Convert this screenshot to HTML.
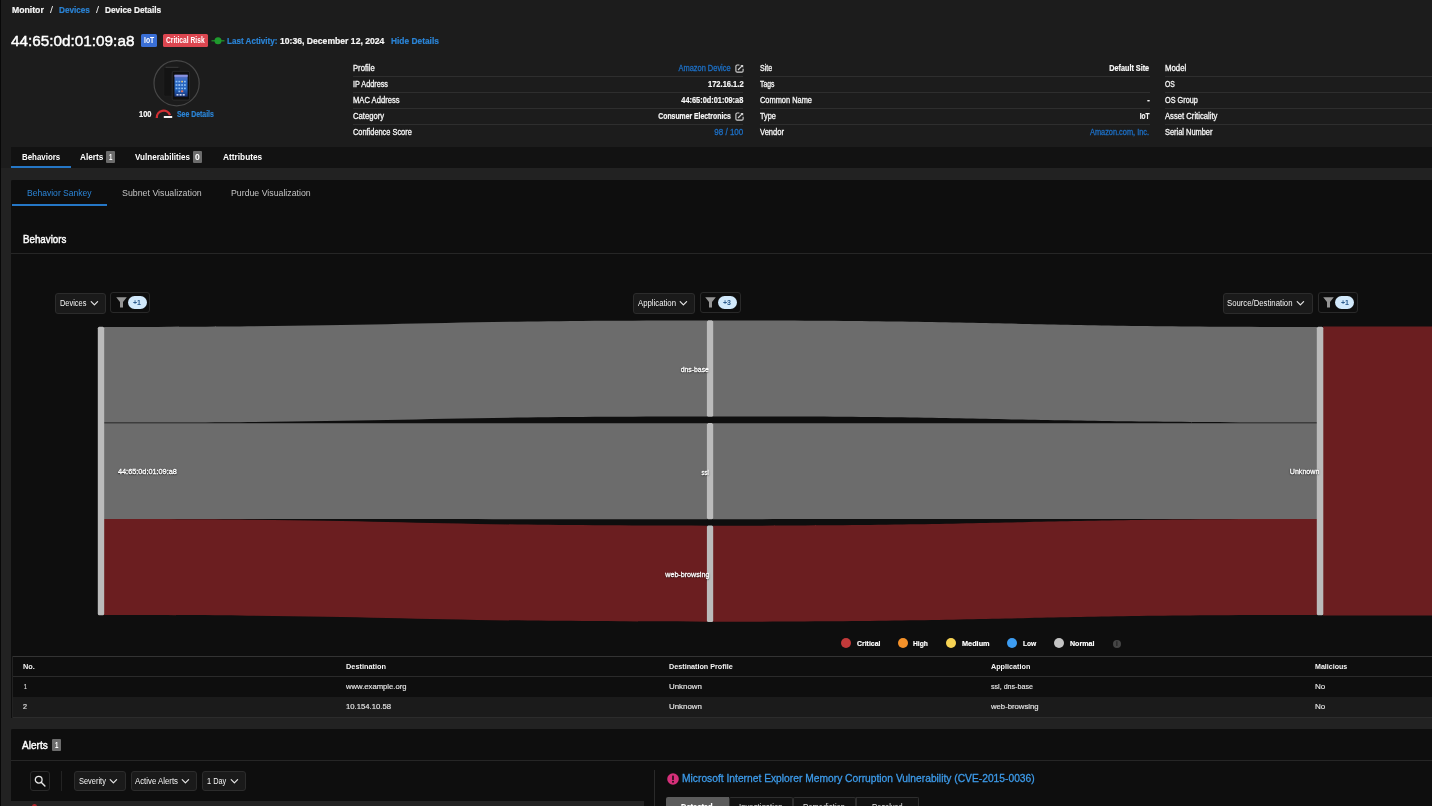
<!DOCTYPE html>
<html lang="en">
<head>
<meta charset="utf-8">
<title>Device Details</title>
<style>
*{box-sizing:border-box;margin:0;padding:0}
html,body{width:1432px;height:806px;overflow:hidden;background:#1b1b1b;}
body{position:relative;font-family:"Liberation Sans",sans-serif;color:#f0f0f0;font-size:9px;}
.abs{position:absolute}
.t{position:absolute;white-space:nowrap;line-height:14px;height:14px;transform-origin:0 50%;}
.t.r{transform-origin:100% 50%;}
.b{font-weight:bold}
.hl{position:absolute;height:1px;background:#2e2e2e}
.btn{position:absolute;border:1px solid #2c2c2c;border-radius:3px;background:#1a1a1a}
.fbtn{position:absolute;border:1px solid #292929;border-radius:3px;background:transparent}
.pill{position:absolute;border-radius:7px;background:#d2e9fb}
.badge{position:absolute;background:#6c6c6c;border-radius:1px}
#txt{position:absolute;left:0;top:0;width:1432px;height:806px;will-change:transform}

</style>
</head>
<body>
<!-- backgrounds -->
<div class="abs" style="left:0;top:0;width:1432px;height:147px;background:#1c1c1c"></div>
<div class="abs" style="left:0;top:147px;width:11px;height:21px;background:#1c1c1c"></div>
<div class="abs" style="left:0;top:168px;width:11px;height:638px;background:#222222"></div>
<div class="abs" style="left:0;top:0;width:1.2px;height:806px;background:#080808"></div>
<div class="abs" style="left:11px;top:146.5px;width:1421px;height:21.5px;background:#121212"></div>
<div class="abs" style="left:11px;top:168px;width:1421px;height:11.5px;background:#222222"></div>
<div class="abs" style="left:11px;top:179.5px;width:1421px;height:538px;background:#0e0e0e;border-top-left-radius:2px"></div>
<div class="abs" style="left:11px;top:717.5px;width:1421px;height:11.5px;background:#222222"></div>
<div class="abs" style="left:11px;top:729px;width:1421px;height:77px;background:#0e0e0e;border-top-left-radius:2px"></div>

<!-- title badges -->
<div class="abs" style="left:141px;top:34px;width:16px;height:12.6px;background:#3a6fd6;border-radius:1.5px"></div>
<div class="abs" style="left:163px;top:34px;width:45px;height:12.6px;background:#dc4650;border-radius:1.5px"></div>
<svg class="abs" style="left:211px;top:35px" width="14" height="12" viewBox="0 0 14 12"><line x1="0.5" y1="5.8" x2="13.5" y2="5.8" stroke="#1f9a2d" stroke-width="1.2"/><circle cx="7" cy="5.8" r="3.5" fill="#1f9a2d"/></svg>

<!-- info table lines -->
<div class="hl" style="left:353px;top:76px;width:390.3px"></div>
<div class="hl" style="left:353px;top:92px;width:390.3px"></div>
<div class="hl" style="left:353px;top:108px;width:390.3px"></div>
<div class="hl" style="left:353px;top:123.5px;width:390.3px"></div>
<div class="hl" style="left:759.5px;top:76px;width:390px"></div>
<div class="hl" style="left:759.5px;top:92px;width:390px"></div>
<div class="hl" style="left:759.5px;top:108px;width:390px"></div>
<div class="hl" style="left:759.5px;top:123.5px;width:390px"></div>
<div class="hl" style="left:1165.2px;top:76px;width:267px"></div>
<div class="hl" style="left:1165.2px;top:92px;width:267px"></div>
<div class="hl" style="left:1165.2px;top:108px;width:267px"></div>
<div class="hl" style="left:1165.2px;top:123.5px;width:267px"></div>

<!-- main tab underline + badges -->
<div class="abs" style="left:11px;top:166px;width:60px;height:2px;background:#2577c6"></div>
<div class="badge" style="left:106px;top:151px;width:9px;height:12.3px"></div>
<div class="badge" style="left:193px;top:151px;width:9.4px;height:12.3px"></div>
<!-- sub tab underline -->
<div class="abs" style="left:11.6px;top:204px;width:95.4px;height:2px;background:#2577c6"></div>
<div class="hl" style="left:11px;top:253px;width:1421px;background:#262626"></div>

<!-- sankey controls -->
<div class="btn" style="left:55px;top:293px;width:50.5px;height:20.5px"></div>
<svg class="abs" style="left:89.5px;top:299.5px" width="9" height="7" viewBox="0 0 9 7"><path d="M1.2 1.7 L4.4 4.9 L7.6 1.7" fill="none" stroke="#e6e6e6" stroke-width="1.2" stroke-linecap="round" stroke-linejoin="round"/></svg>
<div class="fbtn" style="left:110.2px;top:292.3px;width:40px;height:20.6px"></div>
<svg class="abs" style="left:115.5px;top:297.3px" width="11" height="11" viewBox="0 0 11 11"><path d="M0.2 0.3 H10.8 L7 4.9 V10.6 H4 V4.9 Z" fill="#959595"/></svg>
<div class="pill" style="left:127.7px;top:296.2px;width:19.3px;height:12.8px"></div>

<div class="btn" style="left:633.3px;top:293px;width:62.2px;height:20.5px"></div>
<svg class="abs" style="left:679px;top:299.5px" width="9" height="7" viewBox="0 0 9 7"><path d="M1.2 1.7 L4.4 4.9 L7.6 1.7" fill="none" stroke="#e6e6e6" stroke-width="1.2" stroke-linecap="round" stroke-linejoin="round"/></svg>
<div class="fbtn" style="left:700.3px;top:292.3px;width:40.3px;height:20.6px"></div>
<svg class="abs" style="left:705.3px;top:297.3px" width="11" height="11" viewBox="0 0 11 11"><path d="M0.2 0.3 H10.8 L7 4.9 V10.6 H4 V4.9 Z" fill="#959595"/></svg>
<div class="pill" style="left:717.8px;top:296.2px;width:19px;height:12.8px"></div>

<div class="btn" style="left:1223px;top:293px;width:89.7px;height:20.5px"></div>
<svg class="abs" style="left:1296.2px;top:299.5px" width="9" height="7" viewBox="0 0 9 7"><path d="M1.2 1.7 L4.4 4.9 L7.6 1.7" fill="none" stroke="#e6e6e6" stroke-width="1.2" stroke-linecap="round" stroke-linejoin="round"/></svg>
<div class="fbtn" style="left:1318px;top:292.3px;width:39.8px;height:20.6px"></div>
<svg class="abs" style="left:1322.5px;top:297.3px" width="11" height="11" viewBox="0 0 11 11"><path d="M0.2 0.3 H10.8 L7 4.9 V10.6 H4 V4.9 Z" fill="#959595"/></svg>
<div class="pill" style="left:1335px;top:296.2px;width:19px;height:12.8px"></div>

<!-- sankey -->
<svg class="abs" style="left:0;top:310px" width="1432" height="320" viewBox="0 310 1432 320">
  <g fill="#6c6c6c">
    <path d="M104 327 C405.5 327 405.5 320.5 707 320.5 L707 416.5 C405.5 416.5 405.5 422.6 104 422.6 Z"/>
    <path d="M104 423.2 C405.5 423.2 405.5 423.3 707 423.3 L707 519.2 C405.5 519.2 405.5 519 104 519 Z"/>
    <path d="M713 320.5 C1015 320.5 1015 327 1317 327 L1317 422.6 C1015 422.6 1015 416.5 713 416.5 Z"/>
    <path d="M713 423.3 C1015 423.3 1015 423.2 1317 423.2 L1317 519 C1015 519 1015 519.2 713 519.2 Z"/>
  </g>
  <g fill="#6b1e20">
    <path d="M104 519 C405.5 519 405.5 525.7 707 525.7 L707 621.7 C405.5 621.7 405.5 615 104 615 Z"/>
    <path d="M713 525.7 C1015 525.7 1015 519 1317 519 L1317 615 C1015 615 1015 621.7 713 621.7 Z"/>
    <rect x="1323" y="326.5" width="109" height="289"/>
  </g>
  <g fill="#bbbbbb">
    <rect x="97.8" y="326.8" width="6.4" height="288.4" rx="1.5"/>
    <rect x="706.9" y="320.3" width="6.3" height="96.4" rx="1.5"/>
    <rect x="706.9" y="423.1" width="6.3" height="96.2" rx="1.5"/>
    <rect x="706.9" y="525.5" width="6.3" height="96.4" rx="1.5"/>
    <rect x="1316.8" y="326.8" width="6.5" height="288.4" rx="1.5"/>
  </g>
</svg>

<!-- legend -->
<div class="abs" style="left:840.8px;top:638.3px;width:10.2px;height:10.2px;border-radius:50%;background:#c23a3a"></div>
<div class="abs" style="left:897.8px;top:638.3px;width:10.2px;height:10.2px;border-radius:50%;background:#f5922a"></div>
<div class="abs" style="left:945.8px;top:638.3px;width:10.2px;height:10.2px;border-radius:50%;background:#f7d354"></div>
<div class="abs" style="left:1007.3px;top:638.3px;width:10.2px;height:10.2px;border-radius:50%;background:#3d9df2"></div>
<div class="abs" style="left:1054.2px;top:638.3px;width:10.2px;height:10.2px;border-radius:50%;background:#c4c4c4"></div>
<div class="abs" style="left:1112.5px;top:639.5px;width:8px;height:8px;border-radius:50%;background:#454545"></div>

<!-- table -->
<div class="hl" style="left:12px;top:656px;width:1420px;background:#333"></div>
<div class="hl" style="left:12px;top:675.7px;width:1420px;background:#2a2a2a"></div>
<div class="abs" style="left:12px;top:697px;width:1420px;height:20.5px;background:#1b1b1b"></div>
<div class="hl" style="left:12px;top:717px;width:1420px;background:#2c2c2c"></div>
<div class="abs" style="left:12px;top:656px;width:1px;height:62px;background:#222"></div>

<!-- alerts -->
<div class="badge" style="left:51.8px;top:738.7px;width:8.8px;height:12.3px"></div>
<div class="hl" style="left:11px;top:760px;width:1421px;background:#262626"></div>
<div class="fbtn" style="left:30.2px;top:771.2px;width:19.4px;height:19.6px"></div>
<svg class="abs" style="left:33.6px;top:775px" width="12" height="12" viewBox="0 0 11 11"><circle cx="4.3" cy="4.3" r="3.1" fill="none" stroke="#e6e6e6" stroke-width="1.2"/><line x1="6.6" y1="6.6" x2="10" y2="10" stroke="#e6e6e6" stroke-width="1.3" stroke-linecap="round"/></svg>
<div class="abs" style="left:60.7px;top:771px;width:1px;height:20px;background:#232323"></div>
<div class="btn" style="left:74.2px;top:771.2px;width:51.9px;height:19.6px"></div>
<svg class="abs" style="left:109.2px;top:777.5px" width="9" height="7" viewBox="0 0 9 7"><path d="M1.2 1.7 L4.4 4.9 L7.6 1.7" fill="none" stroke="#e6e6e6" stroke-width="1.2" stroke-linecap="round" stroke-linejoin="round"/></svg>
<div class="btn" style="left:131px;top:771.2px;width:65.8px;height:19.6px"></div>
<svg class="abs" style="left:181.3px;top:777.5px" width="9" height="7" viewBox="0 0 9 7"><path d="M1.2 1.7 L4.4 4.9 L7.6 1.7" fill="none" stroke="#e6e6e6" stroke-width="1.2" stroke-linecap="round" stroke-linejoin="round"/></svg>
<div class="btn" style="left:202.4px;top:771.2px;width:43.2px;height:19.6px"></div>
<svg class="abs" style="left:230px;top:777.5px" width="9" height="7" viewBox="0 0 9 7"><path d="M1.2 1.7 L4.4 4.9 L7.6 1.7" fill="none" stroke="#e6e6e6" stroke-width="1.2" stroke-linecap="round" stroke-linejoin="round"/></svg>
<div class="abs" style="left:11px;top:800.8px;width:633px;height:6px;background:#232323"></div>
<div class="abs" style="left:32.3px;top:804.2px;width:5px;height:5px;border-radius:50%;background:#b3262c"></div>
<div class="abs" style="left:654px;top:770px;width:1px;height:36px;background:#2a2a2a"></div>
<svg class="abs" style="left:666.9px;top:772.9px" width="12" height="12" viewBox="0 0 12 12"><circle cx="6" cy="6" r="5.8" fill="#d6307a"/><rect x="5.2" y="2.6" width="1.6" height="4.4" rx="0.5" fill="#1a0a12"/><circle cx="6" cy="8.7" r="0.95" fill="#1a0a12"/></svg>
<!-- status tabs -->
<div class="abs" style="left:666px;top:796.5px;width:63px;height:10px;background:#5c5c5c;border-top-left-radius:2px"></div>
<div class="abs" style="left:729px;top:796.5px;width:63.5px;height:10px;border:1px solid #2e2e2e;border-bottom:none;background:#121212;border-radius:2px 2px 0 0"></div>
<div class="abs" style="left:792.5px;top:796.5px;width:63.3px;height:10px;border:1px solid #2e2e2e;border-bottom:none;background:#121212;border-radius:2px 2px 0 0"></div>
<div class="abs" style="left:855.8px;top:796.5px;width:63.3px;height:10px;border:1px solid #2e2e2e;border-bottom:none;background:#121212;border-top-right-radius:2px"></div>

<!-- external link icons -->
<svg class="abs" style="left:734.5px;top:64.3px" width="9" height="9" viewBox="0 0 9 9"><path d="M4.4 1 H2.2 Q0.9 1 0.9 2.3 V6.9 Q0.9 8.1 2.2 8.1 H6.8 Q8.1 8.1 8.1 6.9 V4.8" fill="none" stroke="#d4d4d4" stroke-width="1.1"/><path d="M3 6 L7.6 1.4" stroke="#d4d4d4" stroke-width="1.2" fill="none"/><path d="M5.3 0.9 H8.2 V3.8 Z" fill="#d4d4d4"/></svg>
<svg class="abs" style="left:734.5px;top:112.3px" width="9" height="9" viewBox="0 0 9 9"><path d="M4.4 1 H2.2 Q0.9 1 0.9 2.3 V6.9 Q0.9 8.1 2.2 8.1 H6.8 Q8.1 8.1 8.1 6.9 V4.8" fill="none" stroke="#d4d4d4" stroke-width="1.1"/><path d="M3 6 L7.6 1.4" stroke="#d4d4d4" stroke-width="1.2" fill="none"/><path d="M5.3 0.9 H8.2 V3.8 Z" fill="#d4d4d4"/></svg>

<!-- device image -->
<svg class="abs" style="left:150px;top:58px" width="54" height="64" viewBox="150 58 54 64">
  <defs>
    <linearGradient id="scr" x1="0" y1="0" x2="0" y2="1">
      <stop offset="0" stop-color="#7a84cc"/><stop offset="0.12" stop-color="#5070c4"/><stop offset="0.3" stop-color="#2a68c4"/><stop offset="0.7" stop-color="#2260b8"/><stop offset="1" stop-color="#182f74"/>
    </linearGradient>
  </defs>
  <circle cx="176.6" cy="83.2" r="22.6" fill="#1b1b1b" stroke="#474747" stroke-width="1.2"/>
  <rect x="163.8" y="67" width="16.4" height="29.2" rx="1.5" fill="#141414" stroke="#242424" stroke-width="0.6"/>
  <rect x="165.5" y="66.8" width="13" height="1.2" fill="#3a3a3a" opacity=".8"/>
  <rect x="172.2" y="71.3" width="17.4" height="28.8" rx="1.6" fill="#0f0f0f" stroke="#303030" stroke-width="0.8"/>
  <rect x="174.5" y="74.8" width="13.1" height="21.8" fill="url(#scr)"/>
  <rect x="174.5" y="74.8" width="13.1" height="2" fill="#8b93e0"/>
  <g fill="#9fd0ff" opacity=".85">
    <rect x="175.6" y="80.8" width="1.8" height="1.6"/><rect x="178.4" y="80.8" width="1.8" height="1.6"/><rect x="181.2" y="80.8" width="1.8" height="1.6" fill="#ffcf70"/><rect x="184" y="80.8" width="1.8" height="1.6"/>
    <rect x="175.6" y="84.2" width="1.8" height="1.6"/><rect x="178.4" y="84.2" width="1.8" height="1.6" fill="#cfe6ff"/><rect x="181.2" y="84.2" width="1.8" height="1.6"/><rect x="184" y="84.2" width="1.8" height="1.6"/>
    <rect x="175.6" y="87.6" width="1.8" height="1.6"/><rect x="178.4" y="87.6" width="1.8" height="1.6"/><rect x="181.2" y="87.6" width="1.8" height="1.6"/><rect x="184" y="87.6" width="1.8" height="1.6"/>
    <rect x="178.4" y="90.6" width="1.8" height="1.6"/><rect x="181" y="90.4" width="2.2" height="1.8" fill="#ff7a50"/>
    <rect x="176.5" y="94" width="2" height="1.6" fill="#e6f0ff"/><rect x="179.6" y="94" width="2" height="1.6" fill="#e6f0ff"/><rect x="182.7" y="94" width="2" height="1.6" fill="#e6f0ff"/>
  </g>
  <!-- gauge -->
  <path d="M156.8 118 A6.8 6.8 0 0 1 170 115.2" fill="none" stroke="#d22f33" stroke-width="2.3"/>
  <rect x="163.8" y="116" width="8.4" height="2" fill="#f4f4f4"/>
</svg>

<div id="txt">
<div class="t b" style="top:2.60px;font-size:9px;color:#f6f6f6;left:12.00px;-webkit-text-stroke:0.2px currentColor;transform:scaleX(0.9636);">Monitor</div>
<div class="t" style="top:2.60px;font-size:9px;color:#f6f6f6;left:49.60px;transform:scaleX(1.1925);">/</div>
<div class="t b" style="top:2.60px;font-size:9px;color:#2b84d6;left:59.40px;-webkit-text-stroke:0.2px currentColor;transform:scaleX(0.9080);">Devices</div>
<div class="t" style="top:2.60px;font-size:9px;color:#f6f6f6;left:96.00px;transform:scaleX(1.1925);">/</div>
<div class="t b" style="top:2.60px;font-size:9px;color:#f6f6f6;left:105.40px;-webkit-text-stroke:0.2px currentColor;transform:scaleX(0.9206);">Device Details</div>
<div class="t" style="top:33.90px;font-size:15.3px;color:#ffffff;left:11.00px;-webkit-text-stroke:0.45px currentColor;transform:scaleX(1.0005);">44:65:0d:01:09:a8</div>
<div class="t b" style="top:33.30px;font-size:9.8px;color:#ffffff;left:143.90px;transform:scaleX(0.6937);">IoT</div>
<div class="t b" style="top:33.40px;font-size:9.4px;color:#ffffff;left:165.80px;transform:scaleX(0.7121);">Critical Risk</div>
<div class="t b" style="top:33.80px;font-size:9px;color:#2b84d6;left:227.40px;-webkit-text-stroke:0.2px currentColor;transform:scaleX(0.8988);">Last Activity:</div>
<div class="t b" style="top:33.80px;font-size:9px;color:#f6f6f6;left:280.40px;-webkit-text-stroke:0.2px currentColor;transform:scaleX(0.9571);">10:36, December 12, 2024</div>
<div class="t b" style="top:33.80px;font-size:9px;color:#2b84d6;left:390.60px;-webkit-text-stroke:0.2px currentColor;transform:scaleX(0.9295);">Hide Details</div>
<div class="t b" style="top:107.00px;font-size:8.4px;color:#f6f6f6;left:138.50px;-webkit-text-stroke:0.2px currentColor;transform:scaleX(0.8939);">100</div>
<div class="t b" style="top:107.00px;font-size:8.4px;color:#2b84d6;left:176.70px;-webkit-text-stroke:0.2px currentColor;transform:scaleX(0.8254);">See Details</div>
<div class="t" style="top:61.00px;font-size:8.4px;color:#f6f6f6;left:353.30px;-webkit-text-stroke:0.3px currentColor;transform:scaleX(0.9137);">Profile</div>
<div class="t" style="top:77.00px;font-size:8.4px;color:#f6f6f6;left:353.30px;-webkit-text-stroke:0.3px currentColor;transform:scaleX(0.8672);">IP Address</div>
<div class="t" style="top:93.00px;font-size:8.4px;color:#f6f6f6;left:353.30px;-webkit-text-stroke:0.3px currentColor;transform:scaleX(0.9081);">MAC Address</div>
<div class="t" style="top:109.00px;font-size:8.4px;color:#f6f6f6;left:353.30px;-webkit-text-stroke:0.3px currentColor;transform:scaleX(0.9122);">Category</div>
<div class="t" style="top:125.00px;font-size:8.4px;color:#f6f6f6;left:353.30px;-webkit-text-stroke:0.3px currentColor;transform:scaleX(0.8832);">Confidence Score</div>
<div class="t r" style="top:61.00px;font-size:8.4px;color:#1d6fc4;right:701.40px;-webkit-text-stroke:0.3px currentColor;transform:scaleX(0.8899);">Amazon Device</div>
<div class="t r b" style="top:77.00px;font-size:8.4px;color:#f6f6f6;right:688.80px;-webkit-text-stroke:0.2px currentColor;transform:scaleX(0.8991);">172.16.1.2</div>
<div class="t r b" style="top:93.00px;font-size:8.4px;color:#f6f6f6;right:688.80px;-webkit-text-stroke:0.2px currentColor;transform:scaleX(0.8820);">44:65:0d:01:09:a8</div>
<div class="t r b" style="top:109.00px;font-size:8.4px;color:#f6f6f6;right:701.40px;-webkit-text-stroke:0.2px currentColor;transform:scaleX(0.8166);">Consumer Electronics</div>
<div class="t r" style="top:125.00px;font-size:8.4px;color:#1d6fc4;right:688.80px;-webkit-text-stroke:0.3px currentColor;transform:scaleX(0.9577);">98 / 100</div>
<div class="t" style="top:61.00px;font-size:8.4px;color:#f6f6f6;left:759.60px;-webkit-text-stroke:0.3px currentColor;transform:scaleX(0.8450);">Site</div>
<div class="t" style="top:77.00px;font-size:8.4px;color:#f6f6f6;left:759.60px;-webkit-text-stroke:0.3px currentColor;transform:scaleX(0.8134);">Tags</div>
<div class="t" style="top:93.00px;font-size:8.4px;color:#f6f6f6;left:759.60px;-webkit-text-stroke:0.3px currentColor;transform:scaleX(0.8865);">Common Name</div>
<div class="t" style="top:109.00px;font-size:8.4px;color:#f6f6f6;left:759.60px;-webkit-text-stroke:0.3px currentColor;transform:scaleX(0.8757);">Type</div>
<div class="t" style="top:125.00px;font-size:8.4px;color:#f6f6f6;left:759.60px;-webkit-text-stroke:0.3px currentColor;transform:scaleX(0.9041);">Vendor</div>
<div class="t r b" style="top:61.00px;font-size:8.4px;color:#f6f6f6;right:282.60px;-webkit-text-stroke:0.2px currentColor;transform:scaleX(0.8638);">Default Site</div>
<div class="t r b" style="top:93.00px;font-size:8.4px;color:#f6f6f6;right:282.60px;-webkit-text-stroke:0.2px currentColor;transform:scaleX(0.8939);">-</div>
<div class="t r b" style="top:109.00px;font-size:8.4px;color:#f6f6f6;right:282.60px;-webkit-text-stroke:0.2px currentColor;transform:scaleX(0.7801);">IoT</div>
<div class="t r" style="top:125.00px;font-size:8.4px;color:#1d6fc4;right:282.60px;-webkit-text-stroke:0.3px currentColor;transform:scaleX(0.8802);">Amazon.com, Inc.</div>
<div class="t" style="top:61.00px;font-size:8.4px;color:#f6f6f6;left:1165.40px;-webkit-text-stroke:0.3px currentColor;transform:scaleX(0.9337);">Model</div>
<div class="t" style="top:77.00px;font-size:8.4px;color:#f6f6f6;left:1165.40px;-webkit-text-stroke:0.3px currentColor;transform:scaleX(0.8093);">OS</div>
<div class="t" style="top:93.00px;font-size:8.4px;color:#f6f6f6;left:1165.40px;-webkit-text-stroke:0.3px currentColor;transform:scaleX(0.8696);">OS Group</div>
<div class="t" style="top:109.00px;font-size:8.4px;color:#f6f6f6;left:1165.40px;-webkit-text-stroke:0.3px currentColor;transform:scaleX(0.9153);">Asset Criticality</div>
<div class="t" style="top:125.00px;font-size:8.4px;color:#f6f6f6;left:1165.40px;-webkit-text-stroke:0.3px currentColor;transform:scaleX(0.8855);">Serial Number</div>
<div class="t b" style="top:149.90px;font-size:9.2px;color:#ffffff;left:21.50px;transform:scaleX(0.8596);">Behaviors</div>
<div class="t b" style="top:149.90px;font-size:9.2px;color:#ffffff;left:80.00px;transform:scaleX(0.8984);">Alerts</div>
<div class="t b" style="top:150.10px;font-size:8.8px;color:#ffffff;left:108.90px;transform:scaleX(0.6930);">1</div>
<div class="t b" style="top:149.90px;font-size:9.2px;color:#ffffff;left:135.20px;transform:scaleX(0.8804);">Vulnerabilities</div>
<div class="t b" style="top:150.10px;font-size:8.8px;color:#ffffff;left:195.30px;transform:scaleX(0.9783);">0</div>
<div class="t b" style="top:149.90px;font-size:9.2px;color:#ffffff;left:222.60px;transform:scaleX(0.9034);">Attributes</div>
<div class="t" style="top:185.60px;font-size:9.3px;color:#2b84d6;left:27.30px;transform:scaleX(0.9190);">Behavior Sankey</div>
<div class="t" style="top:185.60px;font-size:9.3px;color:#c4c4c4;left:121.70px;transform:scaleX(0.9479);">Subnet Visualization</div>
<div class="t" style="top:185.60px;font-size:9.3px;color:#c4c4c4;left:231.30px;transform:scaleX(0.9421);">Purdue Visualization</div>
<div class="t" style="top:231.80px;font-size:11.6px;color:#ffffff;left:22.50px;-webkit-text-stroke:0.45px currentColor;transform:scaleX(0.8417);">Behaviors</div>
<div class="t" style="top:296.20px;font-size:8.5px;color:#f4f4f4;left:59.60px;transform:scaleX(0.8732);">Devices</div>
<div class="t b" style="top:295.80px;font-size:8px;color:#2a5a8c;left:133.40px;transform:scaleX(0.8767);">+1</div>
<div class="t" style="top:296.20px;font-size:8.5px;color:#f4f4f4;left:637.50px;transform:scaleX(0.9136);">Application</div>
<div class="t b" style="top:295.80px;font-size:8px;color:#2a5a8c;left:723.20px;transform:scaleX(0.8767);">+3</div>
<div class="t" style="top:296.20px;font-size:8.5px;color:#f4f4f4;left:1227.40px;transform:scaleX(0.9119);">Source/Destination</div>
<div class="t b" style="top:295.80px;font-size:8px;color:#2a5a8c;left:1340.50px;transform:scaleX(0.8767);">+1</div>
<div class="t r" style="top:362.60px;font-size:8px;color:#ffffff;right:722.70px;-webkit-text-stroke:0.3px currentColor;transform:scaleX(0.8566);text-shadow:0 1px 1.5px rgba(0,0,0,.75),0 0 2px rgba(0,0,0,.5);">dns-base</div>
<div class="t r" style="top:465.60px;font-size:8px;color:#ffffff;right:722.80px;-webkit-text-stroke:0.3px currentColor;transform:scaleX(0.7361);text-shadow:0 1px 1.5px rgba(0,0,0,.75),0 0 2px rgba(0,0,0,.5);">ssl</div>
<div class="t r" style="top:567.60px;font-size:8px;color:#ffffff;right:723.10px;-webkit-text-stroke:0.3px currentColor;transform:scaleX(0.8934);text-shadow:0 1px 1.5px rgba(0,0,0,.75),0 0 2px rgba(0,0,0,.5);">web-browsing</div>
<div class="t r" style="top:465.40px;font-size:8px;color:#ffffff;right:113.10px;-webkit-text-stroke:0.3px currentColor;transform:scaleX(0.8873);text-shadow:0 1px 1.5px rgba(0,0,0,.75),0 0 2px rgba(0,0,0,.5);">Unknown</div>
<div class="t" style="top:464.80px;font-size:8px;color:#ffffff;left:118.20px;-webkit-text-stroke:0.3px currentColor;transform:scaleX(0.9114);text-shadow:0 1px 1.5px rgba(0,0,0,.75),0 0 2px rgba(0,0,0,.5);">44:65:0d:01:09:a8</div>
<div class="t b" style="top:636.50px;font-size:8.0px;color:#ffffff;left:856.90px;-webkit-text-stroke:0.2px currentColor;transform:scaleX(0.8627);">Critical</div>
<div class="t b" style="top:636.50px;font-size:8.0px;color:#ffffff;left:913.20px;-webkit-text-stroke:0.2px currentColor;transform:scaleX(0.8323);">High</div>
<div class="t b" style="top:636.50px;font-size:8.0px;color:#ffffff;left:961.90px;-webkit-text-stroke:0.2px currentColor;transform:scaleX(0.9129);">Medium</div>
<div class="t b" style="top:636.50px;font-size:8.0px;color:#ffffff;left:1022.70px;-webkit-text-stroke:0.2px currentColor;transform:scaleX(0.8313);">Low</div>
<div class="t b" style="top:636.50px;font-size:8.0px;color:#ffffff;left:1069.60px;-webkit-text-stroke:0.2px currentColor;transform:scaleX(0.8853);">Normal</div>
<div class="t b" style="top:659.50px;font-size:7.9px;color:#f6f6f6;left:22.80px;transform:scaleX(0.9278);">No.</div>
<div class="t b" style="top:659.50px;font-size:7.9px;color:#f6f6f6;left:345.50px;transform:scaleX(0.9309);">Destination</div>
<div class="t b" style="top:659.50px;font-size:7.9px;color:#f6f6f6;left:668.60px;transform:scaleX(0.9137);">Destination Profile</div>
<div class="t b" style="top:659.50px;font-size:7.9px;color:#f6f6f6;left:991.40px;transform:scaleX(0.9146);">Application</div>
<div class="t b" style="top:659.50px;font-size:7.9px;color:#f6f6f6;left:1314.60px;transform:scaleX(0.8980);">Malicious</div>
<div class="t" style="top:680.00px;font-size:8.0px;color:#e6e6e6;left:23.50px;-webkit-text-stroke:0.15px currentColor;transform:scaleX(0.6288);">1</div>
<div class="t" style="top:680.00px;font-size:8.0px;color:#e6e6e6;left:345.50px;-webkit-text-stroke:0.15px currentColor;transform:scaleX(0.9582);">www.example.org</div>
<div class="t" style="top:680.00px;font-size:8.0px;color:#e6e6e6;left:668.60px;-webkit-text-stroke:0.15px currentColor;transform:scaleX(0.9862);">Unknown</div>
<div class="t" style="top:680.00px;font-size:8.0px;color:#e6e6e6;left:991.40px;-webkit-text-stroke:0.15px currentColor;transform:scaleX(0.8888);">ssl, dns-base</div>
<div class="t" style="top:680.00px;font-size:8.0px;color:#e6e6e6;left:1314.60px;-webkit-text-stroke:0.15px currentColor;transform:scaleX(1.0064);">No</div>
<div class="t" style="top:700.30px;font-size:8.0px;color:#e6e6e6;left:23.20px;-webkit-text-stroke:0.15px currentColor;transform:scaleX(0.8982);">2</div>
<div class="t" style="top:700.30px;font-size:8.0px;color:#e6e6e6;left:345.50px;-webkit-text-stroke:0.15px currentColor;transform:scaleX(0.9632);">10.154.10.58</div>
<div class="t" style="top:700.30px;font-size:8.0px;color:#e6e6e6;left:668.60px;-webkit-text-stroke:0.15px currentColor;transform:scaleX(0.9862);">Unknown</div>
<div class="t" style="top:700.30px;font-size:8.0px;color:#e6e6e6;left:991.40px;-webkit-text-stroke:0.15px currentColor;transform:scaleX(0.9644);">web-browsing</div>
<div class="t" style="top:700.30px;font-size:8.0px;color:#e6e6e6;left:1314.60px;-webkit-text-stroke:0.15px currentColor;transform:scaleX(1.0064);">No</div>
<div class="t" style="top:738.00px;font-size:11.6px;color:#ffffff;left:22.10px;-webkit-text-stroke:0.45px currentColor;transform:scaleX(0.8671);">Alerts</div>
<div class="t b" style="top:738.20px;font-size:8.8px;color:#ffffff;left:54.50px;transform:scaleX(0.6930);">1</div>
<div class="t" style="top:774.20px;font-size:8.5px;color:#f4f4f4;left:78.70px;transform:scaleX(0.8757);">Severity</div>
<div class="t" style="top:774.20px;font-size:8.5px;color:#f4f4f4;left:134.70px;transform:scaleX(0.9192);">Active Alerts</div>
<div class="t" style="top:774.20px;font-size:8.5px;color:#f4f4f4;left:207.40px;transform:scaleX(0.8686);">1 Day</div>
<div class="t" style="top:771.30px;font-size:11.0px;color:#3d9bea;left:682.00px;-webkit-text-stroke:0.3px currentColor;transform:scaleX(0.9330);">Microsoft Internet Explorer Memory Corruption Vulnerability (CVE-2015-0036)</div>
<div class="t b" style="top:800.00px;font-size:8.4px;color:#ffffff;left:681.30px;-webkit-text-stroke:0.2px currentColor;transform:scaleX(0.8933);">Detected</div>
<div class="t" style="top:800.00px;font-size:8.5px;color:#e0e0e0;left:739.00px;transform:scaleX(0.9134);">Investigation</div>
<div class="t" style="top:800.00px;font-size:8.5px;color:#e0e0e0;left:803.40px;transform:scaleX(0.8778);">Remediation</div>
<div class="t" style="top:800.00px;font-size:8.5px;color:#e0e0e0;left:872.00px;transform:scaleX(0.8635);">Resolved</div>
<div class="t b" style="top:636.60px;font-size:7px;color:#1a1a1a;left:1115.60px;transform:scaleX(0.9216);">i</div>
</div>
</body>
</html>
